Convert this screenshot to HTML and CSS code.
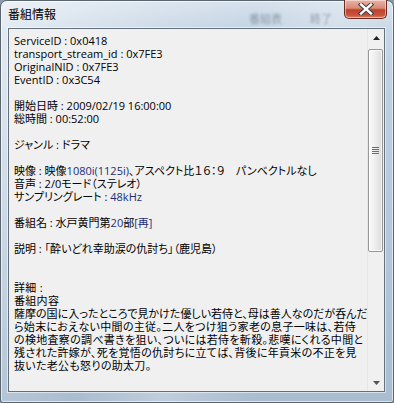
FILE: index.html
```html
<!DOCTYPE html>
<html lang="ja">
<head>
    <meta charset="UTF-8">
    <title>番組情報</title>
    <link rel="stylesheet" href="styles.css">
</head>
<body>
    <div class="window">
        <div class="titlebar">
            <span class="title">番組情報</span>
            <span class="ghost ghost-a">番組表</span>
            <span class="ghost ghost-b">終了</span>
            <button class="close-btn">
                <svg width="16" height="12" viewBox="0 0 16 12">
                    <path d="M3 1.5 L13 10.5 M13 1.5 L3 10.5" stroke="#3c3c3c" stroke-width="4.4" stroke-linecap="square"/>
                    <path d="M3 1.5 L13 10.5 M13 1.5 L3 10.5" stroke="#fff" stroke-width="2.4" stroke-linecap="square"/>
                </svg>
            </button>
        </div>

        <div class="info-box">
            <div class="info-text">
                <p>ServiceID : 0x0418<br>transport_stream_id : 0x7FE3<br>OriginalNID : 0x7FE3<br>EventID : 0x3C54</p>
                <p>開始日時 : 2009/02/19 16:00:00<br>総時間 : 00:52:00</p>
                <p>ジャンル : ドラマ</p>
                <p>映像 : 映像<span class="alt">1080i(1125i)</span>、アスペクト比１６：９　パンベクトルなし<br>音声 : 2/0モード（ステレオ）<br>サンプリングレート : <span class="alt">48kHz</span></p>
                <p>番組名 : 水戸黄門第<span class="alt">20</span>部<span class="alt">[再]</span></p>
                <p class="gap2">説明 : 「酔いどれ幸助涙の仇討ち」（鹿児島）</p>
                <p class="detail">詳細 :<br>番組内容<br><span class="tight">薩摩の国に入ったところで見かけた優しい若侍と、母は善人なのだが呑んだ</span><br>ら始末におえない中間の主従。二人をつけ狙う家老の息子一味は、若侍<br>の検地査察の調べ書きを狙い、ついには若侍を斬殺。悲嘆にくれる中間と<br>残された許嫁が、死を覚悟の仇討ちに立てば、背後に年貢米の不正を見<br>抜いた老公も怒りの助太刀。</p>
            </div>
            <div class="scrollbar">
                <div class="arrow">
                    <svg width="7" height="4" viewBox="0 0 7 4"><path d="M0 4 L3.5 0 L7 4 Z" fill="#222"/></svg>
                </div>
                <div class="thumb">
                    <span class="grip"></span>
                </div>
                <div class="track"></div>
                <div class="arrow">
                    <svg width="7" height="4" viewBox="0 0 7 4"><path d="M0 0 L7 0 L3.5 4 Z" fill="#555"/></svg>
                </div>
            </div>
        </div>
    </div>
</body>
</html>
```

FILE: styles.css
```css
* {
    margin: 0;
    padding: 0;
    box-sizing: border-box;
}

body {
    background: #8a9aaa;
    width: 394px;
    height: 403px;
    overflow: hidden;
}

.window {
    width: 394px;
    height: 403px;
    border: 1px solid #5b6570;
    border-radius: 7px 7px 3px 3px;
    background:
        linear-gradient(115deg, rgba(255,255,255,0.55) 0%, rgba(255,255,255,0.15) 30%, rgba(255,255,255,0) 45%, rgba(255,255,255,0.25) 60%, rgba(255,255,255,0) 75%),
        linear-gradient(180deg, #d5e1ec 0%, #c2d2e2 8%, #b4c6d8 60%, #aabdd0 100%);
    box-shadow: inset 0 0 0 1px rgba(255,255,255,0.6);
    font-family: "Open Sans", "Noto Sans CJK JP", sans-serif;
    position: relative;
}

.titlebar {
    height: 27px;
    display: flex;
    align-items: flex-start;
    padding-left: 7px;
    position: relative;
}

.title {
    font-family: "Noto Sans CJK JP", sans-serif;
    font-size: 12px;
    line-height: 1;
    margin-top: 7px;
    color: #000;
    font-feature-settings: "palt";
}

.ghost {
    position: absolute;
    top: 9px;
    font-size: 11px;
    color: rgba(70, 80, 95, 0.45);
    filter: blur(1.3px);
}

.ghost-a { left: 248px; }
.ghost-b { left: 309px; }

.close-btn {
    margin-left: auto;
    margin-right: 6px;
    margin-top: -1px;
    width: 43px;
    height: 19px;
    border: 1px solid #6b2b22;
    border-top: none;
    border-radius: 0 0 5px 5px;
    background: linear-gradient(180deg, #eab3a6 0%, #d98a78 45%, #c0402c 55%, #c7553e 85%, #e08a6a 100%);
    box-shadow: inset 0 0 0 1px rgba(255,255,255,0.45);
    display: flex;
    align-items: center;
    justify-content: center;
}

.info-box {
    margin-left: 7px;
    width: 377px;
    height: 364px;
    border: 1px solid #63717f;
    outline: 1px solid rgba(255,255,255,0.55);
    background: #f0f0f0;
    display: flex;
}

.info-text {
    flex: 1;
    padding: 5px 0 0 5px;
    font-size: 11px;
    line-height: 13px;
    color: #000;
    white-space: nowrap;
    overflow: hidden;
    font-feature-settings: "palt";
}

.info-text p {
    margin-bottom: 13px;
}

.info-text p.gap2 {
    margin-bottom: 26px;
}

.info-text p.detail {
    letter-spacing: 0.3px;
}

.info-text .tight {
    letter-spacing: 0;
}

.alt {
    color: #1c2d78;
}

.scrollbar {
    width: 17px;
    display: flex;
    flex-direction: column;
    border-left: 1px solid #e6e6e6;
    background: #f0f0f0;
}

.arrow {
    height: 17px;
    display: flex;
    align-items: center;
    justify-content: center;
}

.thumb {
    margin: 3px 1px 0 0;
    height: 203px;
    border: 1px solid #979797;
    border-radius: 2px;
    background: linear-gradient(90deg, #fbfbfb 0%, #eeeeee 45%, #dcdcdc 100%);
    box-shadow: inset 0 0 0 1px rgba(255,255,255,0.7);
    display: flex;
    align-items: center;
    justify-content: center;
}

.grip {
    width: 7px;
    height: 7px;
    background: repeating-linear-gradient(180deg, #6e6e6e 0px, #6e6e6e 1px, transparent 1px, transparent 2px);
}

.track {
    flex: 1;
}
```
